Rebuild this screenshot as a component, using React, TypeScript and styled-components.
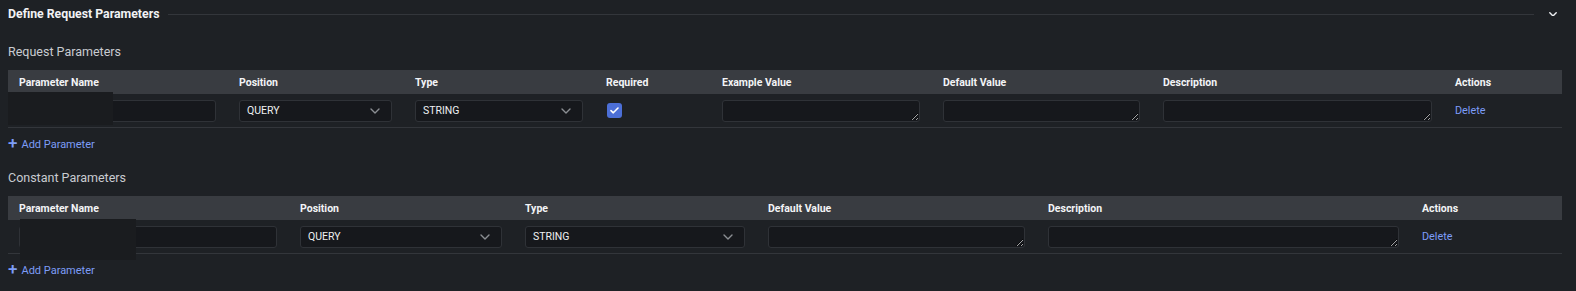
import styled, { createGlobalStyle } from "styled-components";
import { FC } from "react";

const GlobalStyle = createGlobalStyle`
  html, body {
    margin: 0;
    background: #1e2125;
    color-scheme: dark;
  }
  body {
    font-family: Roboto, "Liberation Sans", sans-serif;
  }
`;

type Col = { title: string; width: number; kind: "name" | "select" | "check" | "text" | "action"; value?: string };

const requestCols: Col[] = [
    { title: "Parameter Name", width: 220, kind: "name" },
    { title: "Position", width: 176, kind: "select", value: "QUERY" },
    { title: "Type", width: 191, kind: "select", value: "STRING" },
    { title: "Required", width: 116, kind: "check" },
    { title: "Example Value", width: 221, kind: "text" },
    { title: "Default Value", width: 220, kind: "text" },
    { title: "Description", width: 292, kind: "text" },
    { title: "Actions", width: 118, kind: "action" },
];

const constantCols: Col[] = [
    { title: "Parameter Name", width: 281, kind: "name" },
    { title: "Position", width: 225, kind: "select", value: "QUERY" },
    { title: "Type", width: 243, kind: "select", value: "STRING" },
    { title: "Default Value", width: 280, kind: "text" },
    { title: "Description", width: 374, kind: "text" },
    { title: "Actions", width: 151, kind: "action" },
];

const Chevron: FC<{ color?: string; size?: number; weight?: number }> = ({ color = "#8b8e93", size = 10, weight = 1.4 }) => (
    <svg width={size} height={size * 0.6} viewBox="0 0 10 6" fill="none">
        <path d="M1 1l4 4 4-4" stroke={color} strokeWidth={weight} strokeLinecap="round" strokeLinejoin="round" />
    </svg>
);

const ParamTable: FC<{ cols: Col[]; mask: { left: number; top: number; width: number; height: number } }> = ({ cols, mask }) => {
    const template = cols.map(c => `${c.width}px`).join(" ");
    return (
        <TableWrap>
            <HeaderRow $cols={template}>
                {cols.map(c => <HeadCell key={c.title}>{c.title}</HeadCell>)}
            </HeaderRow>
            <BodyRow $cols={template}>
                {cols.map(c => (
                    <Cell key={c.title}>
                        {c.kind === "name" && <TextInput />}
                        {c.kind === "select" && (
                            <Select>
                                <span>{c.value}</span>
                                <Chevron />
                            </Select>
                        )}
                        {c.kind === "check" && (
                            <Check>
                                <svg width="9" height="7" viewBox="0 0 9 7" fill="none">
                                    <path d="M1 3.6l2.3 2.2L8 1" stroke="#fff" strokeWidth="1.6" strokeLinecap="round" strokeLinejoin="round" />
                                </svg>
                            </Check>
                        )}
                        {c.kind === "text" && <Area rows={1} />}
                        {c.kind === "action" && <DeleteLink>Delete</DeleteLink>}
                    </Cell>
                ))}
            </BodyRow>
            <Mask style={mask} />
        </TableWrap>
    );
};

const App: FC = () => {
    return <>
        <GlobalStyle />
        <Page>
            <TitleRow>
                <Title>Define Request Parameters</Title>
                <Rule />
                <Chevron color="#eef0f3" size={8} weight={1.8} />
            </TitleRow>

            <SubTitle>Request Parameters</SubTitle>
            <ParamTable cols={requestCols} mask={{ left: 0, top: 22, width: 105, height: 33 }} />
            <AddButton><Plus>+</Plus>Add Parameter</AddButton>

            <SubTitle $gap={16}>Constant Parameters</SubTitle>
            <ParamTable cols={constantCols} mask={{ left: 12, top: 23, width: 116, height: 41 }} />
            <AddButton><Plus>+</Plus>Add Parameter</AddButton>
        </Page>
    </>
}

const Page = styled.div`
    padding: 0 14px 10px 8px;
    width: 1554px;
`;

const TitleRow = styled.div`
    display: flex;
    align-items: center;
    height: 28px;
    gap: 9px;
    padding-right: 5px;
`;

const Title = styled.div`
    font-size: 12.3px;
    font-weight: 700;
    color: #f1f2f4;
    white-space: nowrap;
`;

const Rule = styled.div`
    flex: 1;
    height: 1px;
    background: #33363b;
    margin-right: 6px;
`;

const SubTitle = styled.div<{ $gap?: number }>`
    margin-top: ${p => p.$gap ?? 16}px;
    height: 16px;
    line-height: 16px;
    font-size: 12.5px;
    color: #c9ccd1;
    margin-bottom: 10px;
`;

const TableWrap = styled.div`
    position: relative;
`;

const HeaderRow = styled.div<{ $cols: string }>`
    display: grid;
    grid-template-columns: ${p => p.$cols};
    height: 24px;
    align-items: center;
    background: #393c41;
`;

const HeadCell = styled.div`
    padding: 0 11px;
    font-size: 10.5px;
    font-weight: 700;
    color: #f3f4f6;
    white-space: nowrap;
`;

const BodyRow = styled.div<{ $cols: string }>`
    display: grid;
    grid-template-columns: ${p => p.$cols};
    height: 34px;
    align-items: center;
    border-bottom: 1px solid #33363b;
    box-sizing: border-box;
`;

const Cell = styled.div`
    padding: 0 12px 0 11px;
    display: flex;
    align-items: center;
`;

const fieldBase = `
    box-sizing: border-box;
    width: 100%;
    height: 22px;
    background: #16181c;
    border: 1px solid #2f3237;
    border-radius: 3px;
`;

const TextInput = styled.input`
    ${fieldBase}
    outline: none;
`;

const Select = styled.div`
    ${fieldBase}
    display: flex;
    align-items: center;
    justify-content: space-between;
    padding: 0 11px 0 7px;
    font-size: 10.5px;
    color: #eef0f2;
`;

const Area = styled.textarea`
    ${fieldBase}
    display: block;
    resize: vertical;
    padding: 0;
    outline: none;
    color: #eef0f2;
`;

const Check = styled.div`
    width: 15px;
    height: 15px;
    margin-left: 1px;
    border-radius: 3px;
    background: #4c6fd7;
    display: flex;
    align-items: center;
    justify-content: center;
`;

const DeleteLink = styled.span`
    font-size: 10.8px;
    color: #7d9df7;
`;

const AddButton = styled.div`
    display: flex;
    align-items: center;
    gap: 4px;
    height: 20px;
    margin-top: 6px;
    font-size: 11px;
    color: #7d9df7;
`;

const Plus = styled.span`
    font-size: 17px;
    line-height: 1;
    font-weight: 500;
    margin-top: -1px;
`;

const Mask = styled.div`
    position: absolute;
    background: #1a1c1f;
`;

export default App;
